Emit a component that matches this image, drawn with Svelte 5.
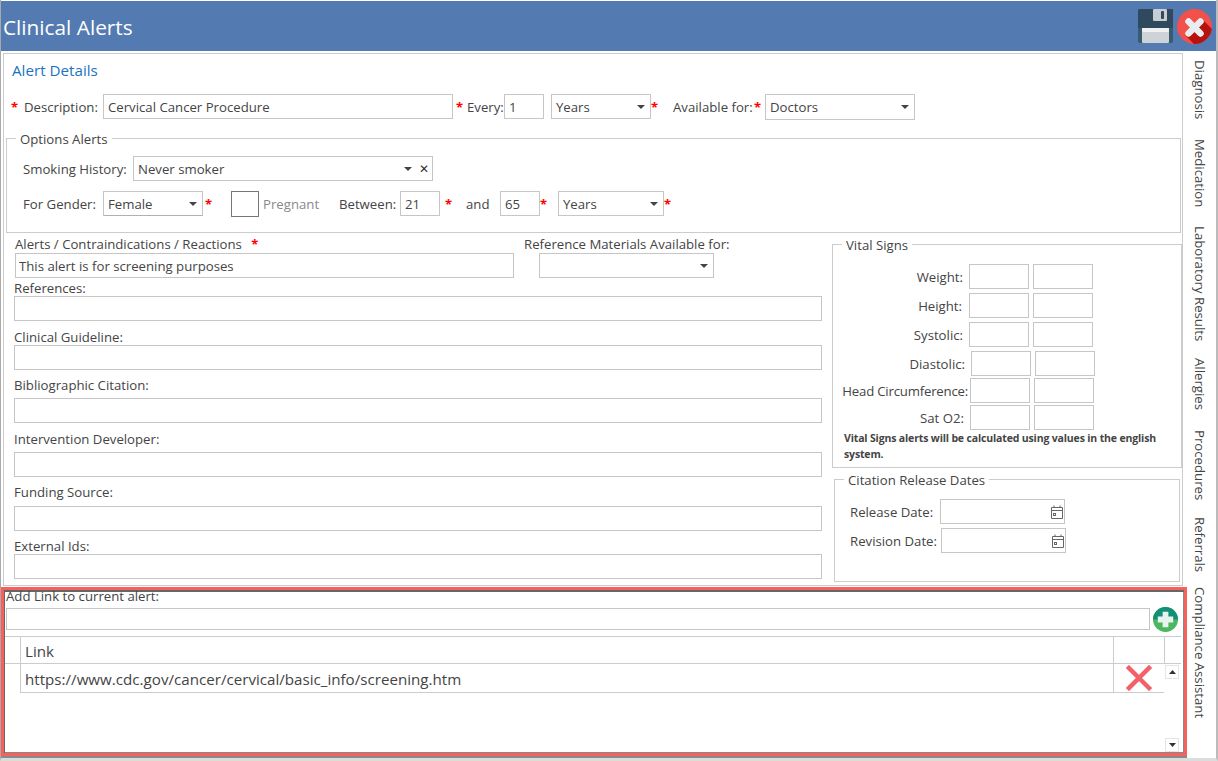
<script>
  const tabs = ['Diagnosis', 'Medication', 'Laboratory Results', 'Allergies', 'Procedures', 'Referrals', 'Compliance Assistant'];
  const vitals = [
    { label: 'Weight:', cls: 'v-a' },
    { label: 'Height:', cls: 'v-b' },
    { label: 'Systolic:', cls: 'v-c' },
    { label: 'Diastolic:', cls: 'v-d' },
    { label: 'Head Circumference:', cls: 'v-e' },
    { label: 'Sat O2:', cls: 'v-f' }
  ];
</script>

{#snippet caret()}
  <svg class="caret" width="8" height="4" viewBox="0 0 8 4"><path d="M0 0h8L4 4z" fill="#444" /></svg>
{/snippet}

{#snippet calendar()}
  <svg class="cal" width="12" height="14" viewBox="0 0 12 14" fill="none" stroke="#666">
    <path d="M.5 2.500h11v11H.5zM.5 5.500h11M3 .5v2.500M9 .5v2.500" />
    <rect x="2.500" y="8.500" width="2" height="2" />
  </svg>
{/snippet}

<div class="app">
  <header class="head">
    <h1>Clinical Alerts</h1>
    <svg class="save" width="35" height="34" viewBox="0 0 35 34">
      <rect width="35" height="34" rx="2" fill="#3c5a6e" />
      <path d="M2 0h33v19H0V2a2 2 0 0 1 2-2z" fill="#2f4a5c" />
      <rect x="15" y="0" width="14" height="12" rx="1" fill="#c5ced2" />
      <rect x="23" y="2" width="3" height="8" rx="1" fill="#33495a" />
      <rect x="4" y="19" width="27" height="15" rx="1" fill="#cdd3d6" />
      <rect x="4" y="19" width="27" height="4" rx="1" fill="#eef0f1" />
    </svg>
    <svg class="close" width="35" height="35" viewBox="0 0 35 35">
      <defs><clipPath id="disc"><circle cx="17.500" cy="17.500" r="17.500" /></clipPath></defs>
      <circle cx="17.500" cy="17.500" r="17.500" fill="#f2514b" />
      <path d="M24 9l14 14v15H20L8 26z" fill="#b8120f" clip-path="url(#disc)" />
      <path d="M11.500 12.500l12 12M23.500 12.500l-12 12" stroke="#e9edf0" stroke-width="6.500" stroke-linecap="round" fill="none" />
    </svg>
  </header>

  <div class="body">
    <div class="main">
      <section class="panel">
        <h2>Alert Details</h2>
        <div class="row r1">
          <span class="star w13">*</span><label class="w79" for="d">Description:</label>
          <input id="d" class="w350" value="Cervical Cancer Procedure" />
          <span class="star ml3 w11">*</span><span class="w37">Every:</span>
          <input class="w40" value="1" />
          <div class="box sel ml7 w100">Years{@render caret()}</div>
          <span class="star w22">*</span><span class="w81">Available for:</span><span class="star w11">*</span>
          <div class="box sel w150 tall">Doctors{@render caret()}</div>
        </div>

        <fieldset class="opts">
          <legend>Options Alerts</legend>
          <div class="row smoke">
            <span class="w110">Smoking History:</span>
            <div class="box sel w300">Never smoker<span class="tail">{@render caret()}<span class="xmark">✕</span></span></div>
          </div>
          <div class="row gender">
            <span class="w80">For Gender:</span>
            <div class="box sel w100 raised">Female{@render caret()}</div>
            <span class="star ml2 w26">*</span>
            <span class="check"></span>
            <span class="muted w76">Pregnant</span>
            <span class="w61">Between:</span>
            <input class="w40" value="21" />
            <span class="star ml5 w21">*</span>
            <span class="w34">and</span>
            <input class="w40" value="65" />
            <span class="star w18">*</span>
            <div class="box sel w106">Years{@render caret()}</div>
            <span class="star">*</span>
          </div>
        </fieldset>

        <div class="lower">
          <div class="left">
            <div class="two">
              <div class="col-a">
                <div class="lbl">Alerts / Contraindications / Reactions <span class="star ml6">*</span></div>
                <input class="w499 tight" value="This alert is for screening purposes" />
              </div>
              <div class="col-b">
                <div class="lbl">Reference Materials Available for:</div>
                <div class="box sel w175 ml15">{@render caret()}</div>
              </div>
            </div>
            <div class="lbl mt2">References:</div><input class="wide" />
            <div class="lbl mt8">Clinical Guideline:</div><input class="wide" />
            <div class="lbl mt7 pb5">Bibliographic Citation:</div><input class="wide" />
            <div class="lbl mt8 pb5">Intervention Developer:</div><input class="wide" />
            <div class="lbl mt7 pb6">Funding Source:</div><input class="wide" />
            <div class="lbl mt7">External Ids:</div><input class="wide" />
          </div>

          <div class="right">
            <fieldset class="vitals">
              <legend>Vital Signs</legend>
              {#each vitals as v}
                <div class="vrow {v.cls}">
                  <span class="vl">{v.label}</span>
                  <input class="w60" /><input class="w60 ml4" />
                </div>
              {/each}
              <p class="note">Vital Signs alerts will be calculated using values in the english system.</p>
            </fieldset>
            <fieldset class="dates">
              <legend>Citation Release Dates</legend>
              <div class="row d1">
                <span class="w90">Release Date:</span>
                <div class="box sel w125">{@render calendar()}</div>
              </div>
              <div class="row d2">
                <span class="w91">Revision Date:</span>
                <div class="box sel w125">{@render calendar()}</div>
              </div>
            </fieldset>
          </div>
        </div>
      </section>

      <section class="links">
        <div class="addlbl">Add Link to current alert:</div>
        <div class="addrow">
          <input class="addin" />
          <svg class="plus" width="25" height="25" viewBox="0 0 26 26">
            <circle cx="13" cy="13" r="13" fill="#4bb75f" />
            <path d="M0 13a13 13 0 0 1 26 0z" fill="#128f74" />
            <path d="M10 5h6v5h5v6h-5v5h-6v-5H5v-6h5z" fill="#e6f3ef" />
          </svg>
        </div>
        <div class="grid">
          <div class="c c0 th"></div>
          <div class="c c1 th">Link</div>
          <div class="c c2 th"></div>
          <div class="c c3 th"></div>
          <div class="c c0 td"></div>
          <div class="c c1 td">https://www.cdc.gov/cancer/cervical/basic_info/screening.htm</div>
          <div class="c c2 td">
            <svg width="26" height="26" viewBox="0 0 26 26"><path d="M3 3l20 20M23 3L3 23" stroke="#f4606a" stroke-width="4.500" stroke-linecap="square" /></svg>
          </div>
          <div class="scroll">
            <span class="sb"><svg width="7" height="4" viewBox="0 0 7 4"><path d="M0 4h7L3.500 0z" fill="#333" /></svg></span>
            <span class="sb"><svg width="7" height="4" viewBox="0 0 7 4"><path d="M0 0h7L3.500 4z" fill="#333" /></svg></span>
          </div>
        </div>
      </section>
    </div>

    <nav class="tabs">
      {#each tabs as t}<span>{t}</span>{/each}
    </nav>
  </div>
</div>

<style>
  :global(body) { margin: 0; background: #fff; }
  * { box-sizing: border-box; }
  .app {
    width: 1218px; height: 761px; overflow: hidden; background: #fff;
    font: 13.2px/16px "Open Sans", "Noto Sans", sans-serif; color: #444;
    border-right: 2px solid #bbb; border-bottom: 3px solid #dcdcdc;
    border-left: 1px solid #aaa;
  }
  .head {
    height: 51px; border-top: 1px solid #fff; background: #537bb1;
    display: flex; align-items: center; padding: 0 4px 0 2px;
  }
  h1 { margin: 2px auto 0 0; font: 400 20.800px/28px "Open Sans", sans-serif; color: #fff; }
  .save { margin-right: 4px; }
  .close { margin-top: 1px; }
  .body { display: flex; margin-top: 2px; margin-left: -1px; }
  .main { width: 1187px; flex: none; }
  .panel { width: 1180px; height: 533px; margin-left: 3px; border: 1px solid #ccc; }
  h2 { margin: 7px 0 0 8px; font: 400 15.200px/18px "Open Sans", sans-serif; color: #1a73c1; }
  .row { display: flex; align-items: center; height: 25px; }
  .r1 { margin-top: 15px; padding-left: 7px; white-space: nowrap; }
  .star { color: #f00; font-weight: 700; font-size: 13px; line-height: 14px; }
  label, span { white-space: nowrap; }
  input, .box {
    height: 25px; border: 1px solid #c6c6c6; background: #fff; padding: 0 4px; margin: 0;
    font: inherit; color: #444; outline: none; border-radius: 0; flex: none; display: block;
  }
  .tight { padding-left: 3px; }
  .sel { display: flex; align-items: center; justify-content: space-between; }
  .caret { margin-left: auto; flex: none; margin-right: 1px; }
  .tail { margin-left: auto; display: flex; align-items: center; gap: 7px; margin-right: -1px; }
  .tail .caret { margin: 0; }
  .xmark { font-size: 12px; line-height: 12px; color: #333; }
  .cal { margin-left: auto; margin-right: -3px; }
  .tall { height: 26px; }
  .raised { border-bottom-color: #b0b0b0; }
  .check { width: 28px; height: 26px; border: 1px solid #777; flex: none; margin-right: 4px; }
  .muted { color: #8a8a8a; }

  .w11 { width: 11px; } .w13 { width: 13px; } .w18 { width: 18px; } .w21 { width: 21px; } .w22 { width: 22px; }
  .w26 { width: 26px; } .w34 { width: 34px; } .w37 { width: 37px; } .w40 { width: 40px; } .w60 { width: 60px; }
  .w61 { width: 61px; } .w76 { width: 76px; } .w79 { width: 79px; } .w80 { width: 80px; } .w81 { width: 81px; }
  .w90 { width: 90px; } .w91 { width: 91px; } .w100 { width: 100px; } .w106 { width: 106px; } .w110 { width: 110px; }
  .w125 { width: 125px; } .w150 { width: 150px; } .w175 { width: 175px; } .w300 { width: 300px; } .w350 { width: 350px; }
  .w499 { width: 499px; }
  .ml2 { margin-left: 2px; } .ml3 { margin-left: 3px; } .ml4 { margin-left: 4px; } .ml5 { margin-left: 5px; }
  .ml6 { margin-left: 6px; } .ml7 { margin-left: 7px; } .ml15 { margin-left: 15px; }
  .mt2 { margin-top: 2px; } .mt7 { margin-top: 7px; } .mt8 { margin-top: 8px; }
  .pb5 { padding-bottom: 5px; } .pb6 { padding-bottom: 6px; }

  fieldset { margin: 0; padding: 0; border: 1px solid #ccc; min-width: 0; }
  legend { padding: 0 4px; margin-left: 9px; font-size: 13.2px; line-height: 22px; height: 20px; }
  .opts { margin: 9px 0 0 2px; width: 1175px; height: 105px; }
  .smoke { margin-top: 8px; padding-left: 16px; }
  .gender { margin-top: 10px; padding-left: 16px; }

  .lower { display: flex; }
  .left { width: 828px; padding-left: 10px; flex: none; }
  .two { display: flex; padding-left: 1px; margin-top: 3px; }
  .col-a { width: 509px; }
  .col-b { width: 200px; }
  .lbl { white-space: nowrap; line-height: 16px; }
  .two .lbl { height: 17px; }
  .wide { width: 808px; }

  .right { flex: none; width: 350px; }
  .vitals { width: 350px; height: 234px; margin-top: 1px; padding-top: 10px; }
  .vrow { display: flex; align-items: center; height: 25px; margin-top: 4px; }
  .vrow:first-of-type { margin-top: 0; }
  .vl { width: 131px; text-align: right; padding-right: 6px; flex: none; }
  .v-a, .v-b, .v-c { padding-left: 5px; }
  .v-d { padding-left: 7px; }
  .v-e, .v-f { padding-left: 6px; margin-top: 2px; }
  .v-e .vl { padding-right: 2px; letter-spacing: -.2px; }
  .v-b .vl { padding-right: 7px; }
  .note { margin: 0; padding: 0 6px 0 11px; font-size: 10.500px; font-weight: 700; line-height: 16px; letter-spacing: -.15px; }
  .dates { width: 346px; height: 113px; margin: 1px 0 0 2px; }
  .d1 { margin-top: 10px; padding-left: 15px; }
  .d2 { margin-top: 4px; padding-left: 15px; }

  .links {
    width: 1186px; height: 169px; margin: 1px 0 0 1px;
    border: 3px solid #f6625b; box-shadow: inset 1px 2px 0 #666, inset -1px -1px 0 #888, 0 2px 0 #8a8a8a;
    padding-left: 1px;
  }
  .addlbl { margin-left: 1px; line-height: 13px; height: 16px; white-space: nowrap; }
  .addrow { display: flex; align-items: center; height: 26px; margin-left: 1px; }
  .addin { width: 1144px; height: 22px; }
  .plus { margin-left: 3px; }
  .grid {
    display: grid; grid-template-columns: 15px 1093px 51px 17px;
    grid-template-rows: 27px 30px; margin-top: 4px; width: 1176px;
    font-size: 15.150px;
  }
  .c { border-top: 1px solid #ccc; display: flex; align-items: center; }
  .c1 { border-left: 1px solid #ccc; padding: 2px 0 0 4px; }
  .c2 { border-left: 1px solid #ccc; justify-content: center; }
  .c3 { border-left: 1px solid #ccc; }
  .td.c1, .td.c2 { border-bottom: 1px solid #ccc; }
  .scroll {
    grid-column: 4; grid-row: 2 / span 2; height: 89px; border-top: 1px solid #ccc;
    display: flex; flex-direction: column; justify-content: space-between; padding: 1px 2px 0 1px;
  }
  .sb {
    width: 14px; height: 14px; border: 1px solid #e4e4e4; display: flex; align-items: center; justify-content: center;
  }
  .tabs {
    display: grid; grid-template-rows: 79px 87px 132px 72px 87px 70px 130px;
    margin-left: 3px; padding-top: 7px; width: 20px; justify-items: center; align-content: start;
  }
  .tabs span { writing-mode: vertical-rl; font-size: 13.200px; line-height: 16px; }
</style>
